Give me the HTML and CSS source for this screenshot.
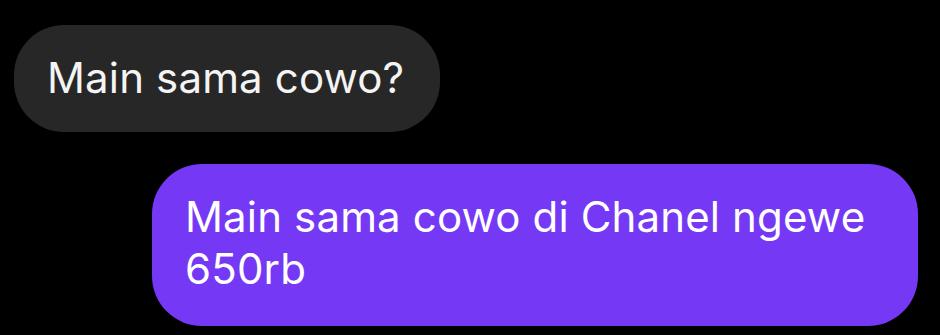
FILE: index.html
```html
<!DOCTYPE html>
<html lang="id">
<head>
    <meta charset="UTF-8">
    <meta name="viewport" content="width=device-width, initial-scale=1.0">
    <title>Chat</title>
    <link rel="stylesheet" href="styles.css">
</head>
<body>
    <div class="chat">
        <div class="bubble incoming">Main sama cowo?</div>
        <div class="bubble outgoing">Main sama cowo di Chanel ngewe 650rb</div>
    </div>
</body>
</html>
```

FILE: styles.css
```css
* {
    box-sizing: border-box;
}
body {
    margin: 0;
    background-color: #000;
    font-family: Inter, "Noto Sans", sans-serif;
    color: #fff;
}
.chat {
    display: flex;
    flex-direction: column;
    gap: 32px;
    padding: 25px 22px 0 14px;
}
.bubble {
    font-size: 42px;
    line-height: 52px;
    letter-spacing: 0.15px;
    border-radius: 50px;
}
.incoming {
    align-self: flex-start;
    background-color: #272727;
    padding: 27px 36px 28px 33px;
    color: #f4f4f4;
}
.outgoing {
    align-self: flex-end;
    max-width: 766px;
    background-color: #7539f5;
    padding: 27px 35px 31px 33px;
}
```
